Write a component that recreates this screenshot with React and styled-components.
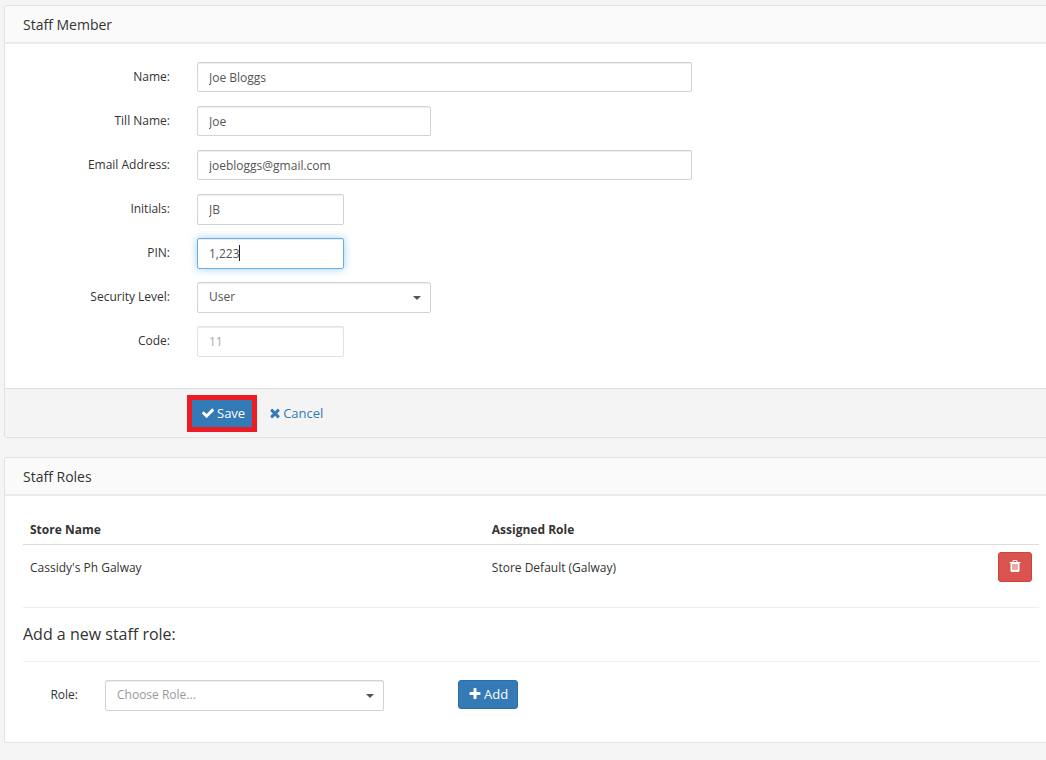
import React from "react";
import styled, { createGlobalStyle, css } from "styled-components";

const GlobalStyle = createGlobalStyle`
  *, *::before, *::after { box-sizing: border-box; }
  body {
    margin: 0;
    background: #f5f5f5;
    color: #333;
    font-family: "Open Sans", "Liberation Sans", sans-serif;
    font-size: 12px;
    line-height: 18px;
  }
  input, select, button { font: inherit; }
`;

const Page = styled.main`
  display: flex;
  flex-direction: column;
  gap: 19px;
  padding: 5px 0 16px 4px;
`;

const Panel = styled.section`
  background: #fff;
  border: 1px solid #e2e2e2;
  border-right: 0;
  border-radius: 3px 0 0 3px;
`;

const PanelHeader = styled.header`
  padding: 9px 18px 7px;
  background: #fafafa;
  border-bottom: 2px solid #ebebeb;
`;

const PanelTitle = styled.h2`
  margin: 0;
  font-size: 14px;
  font-weight: 400;
  line-height: 20px;
`;

const FormBody = styled.div`
  display: flex;
  flex-direction: column;
  gap: 14px;
  padding: 18px 18px 32px;
`;

const FormRow = styled.div`
  display: grid;
  grid-template-columns: 147px minmax(0, 1fr);
  grid-template-rows: 30px;
  column-gap: 27px;
`;

const Label = styled.label`
  line-height: 30px;
  text-align: right;
`;

const widths = { small: "147px", medium: "234px", role: "279px", large: "495px" };

const FieldBox = styled.div`
  position: relative;
  width: 100%;
  max-width: ${(p) => widths[p.$size]};
`;

const control = css`
  display: block;
  width: 100%;
  height: ${(p) => (p.$tall ? "31px" : "30px")};
  border: 1px solid #d3d3d3;
  border-radius: 2px;
  background: #fff;
  color: #555;
  box-shadow: inset 0 1px 1px rgba(0, 0, 0, 0.075);
  outline: none;
`;

const TextInput = styled.input`
  ${control}
  padding: 0 11px;
  ${(p) =>
    p.$active &&
    css`
      border-color: #66afe9;
      box-shadow: inset 0 1px 1px rgba(0, 0, 0, 0.075), 0 0 8px rgba(102, 175, 233, 0.6);
    `}
  &:disabled {
    border-color: #e2e2e2;
    color: #aaa;
  }
`;

const Caret = styled.span`
  position: absolute;
  top: 7px;
  left: 42px;
  width: 1px;
  height: 16px;
  background: #222;
`;

const SelectBox = styled(FieldBox)`
  &::after {
    content: "";
    position: absolute;
    top: 14px;
    right: 10px;
    border: 4px solid transparent;
    border-top-color: #555;
    border-bottom: 0;
    pointer-events: none;
  }
`;

const Select = styled.select`
  ${control}
  appearance: none;
  padding: 0 28px 2px 11px;
  color: ${(p) => (p.$placeholder ? "#999" : "#555")};
`;

const PanelFooter = styled.footer`
  display: flex;
  align-items: center;
  gap: 11px;
  padding: 6px 18px 5px 182px;
  background: #f4f4f4;
  border-top: 1px solid #ddd;
`;

const Button = styled.button`
  display: inline-flex;
  align-items: center;
  justify-content: center;
  gap: 2px;
  height: ${(p) => (p.$danger ? "30px" : "29px")};
  padding: ${(p) => (p.$danger ? "0 9px 2px" : "0 9px 1px")};
  border: 1px solid ${(p) => (p.$danger ? "#d43f3a" : "#2e6da4")};
  border-radius: 3px;
  background: ${(p) => (p.$danger ? "#d9534f" : "#337ab7")};
  color: #fff;
  font-size: 13px;
  cursor: pointer;
`;

const SaveButton = styled(Button)`
  height: 37px;
  padding: 0 7px 1px 9px;
  border: 5px solid #ed1c24;
  border-radius: 0;
  font-weight: 500;
`;

const CancelLink = styled.a`
  display: inline-flex;
  align-items: center;
  gap: 1px;
  padding-bottom: 1px;
  color: #337ab7;
  font-size: 13px;
  font-weight: 500;
  text-decoration: none;
`;

const RolesBody = styled.div`
  padding: 18px 7px 31px 18px;
`;

const Table = styled.table`
  width: 100%;
  border-collapse: collapse;
  table-layout: fixed;
`;

const Th = styled.th`
  width: ${(p) => (p.$action ? "auto" : "calc(100% * 5 / 11)")};
  padding: 7px 7px 5px;
  border-bottom: 1px solid #ddd;
  text-align: left;
  font-weight: 700;
`;

const Td = styled.td`
  padding: ${(p) => (p.$action ? "7px" : "8px 7px 6px")};
  text-align: ${(p) => (p.$action ? "right" : "left")};
  vertical-align: middle;
`;

const SectionTitle = styled.h3`
  margin: 18px 0;
  padding: 17px 0;
  border: solid #eee;
  border-width: 1px 0;
  font-size: 16px;
  font-weight: 400;
  line-height: 19px;
`;

const RoleForm = styled.form`
  display: grid;
  grid-template-columns: 55px minmax(0, 279px) auto;
  justify-content: start;
  align-items: start;
  column-gap: 27px;
`;

const RoleAction = styled.div`
  display: flex;
  padding-left: 47px;
`;

const Svg = styled.svg`
  display: block;
  width: 14px;
  height: 14px;
  fill: currentColor;
`;

const paths = {
  check:
    "M1671 566q0 40-28 68l-724 724-136 136q-28 28-68 28t-68-28l-136-136-362-362q-28-28-28-68t28-68l136-136q28-28 68-28t68 28l294 295 656-657q28-28 68-28t68 28l136 136q28 28 28 68z",
  times:
    "M1490 1322q0 40-28 68l-136 136q-28 28-68 28t-68-28l-294-294-294 294q-28 28-68 28t-68-28l-136-136q-28-28-28-68t28-68l294-294-294-294q-28-28-28-68t28-68l136-136q28-28 68-28t68 28l294 294 294-294q28-28 68-28t68 28l136 136q28 28 28 68t-28 68l-294 294 294 294q28 28 28 68z",
  plus:
    "M1600 736v192q0 40-28 68t-68 28h-416v416q0 40-28 68t-68 28h-192q-40 0-68-28t-28-68v-416h-416q-40 0-68-28t-28-68v-192q0-40 28-68t68-28h416v-416q0-40 28-68t68-28h192q40 0 68 28t28 68v416h416q40 0 68 28t28 68z",
  trash:
    "M704 1376v-704q0-14-9-23t-23-9h-64q-14 0-23 9t-9 23v704q0 14 9 23t23 9h64q14 0 23-9t9-23zm256 0v-704q0-14-9-23t-23-9h-64q-14 0-23 9t-9 23v704q0 14 9 23t23 9h64q14 0 23-9t9-23zm256 0v-704q0-14-9-23t-23-9h-64q-14 0-23 9t-9 23v704q0 14 9 23t23 9h64q14 0 23-9t9-23zm-544-992h448l-48-117q-7-9-17-11h-317q-10 2-17 11zm928 32v64q0 14-9 23t-23 9h-96v948q0 83-47 143.5t-113 60.5h-832q-66 0-113-58.5t-47-141.5v-952h-96q-14 0-23-9t-9-23v-64q0-14 9-23t23-9h309l70-167q15-37 54-63t79-26h320q40 0 79 26t54 63l70 167h309q14 0 23 9t9 23z",
};

const Icon = ({ name }) => (
  <Svg viewBox="0 0 1792 1792" aria-hidden="true">
    <path d={paths[name]} />
  </Svg>
);

const Field = ({ id, label, size, value, active, disabled }) => (
  <FormRow>
    <Label htmlFor={id}>{label}</Label>
    <FieldBox $size={size}>
      <TextInput
        id={id}
        type="text"
        defaultValue={value}
        $active={active}
        $tall={size === "small"}
        disabled={disabled}
      />
      {active && <Caret />}
    </FieldBox>
  </FormRow>
);

export default function App() {
  return (
    <>
      <GlobalStyle />
      <Page>
        <Panel>
          <PanelHeader>
            <PanelTitle>Staff Member</PanelTitle>
          </PanelHeader>
          <FormBody>
            <Field id="name" label="Name:" size="large" value="Joe Bloggs" />
            <Field id="till" label="Till Name:" size="medium" value="Joe" />
            <Field id="email" label="Email Address:" size="large" value="joebloggs@gmail.com" />
            <Field id="initials" label="Initials:" size="small" value="JB" />
            <Field id="pin" label="PIN:" size="small" value="1,223" active />
            <FormRow>
              <Label htmlFor="level">Security Level:</Label>
              <SelectBox $size="medium">
                <Select id="level" defaultValue="User" $tall>
                  <option>User</option>
                </Select>
              </SelectBox>
            </FormRow>
            <Field id="code" label="Code:" size="small" value="11" disabled />
          </FormBody>
          <PanelFooter>
            <SaveButton type="button">
              <Icon name="check" />
              Save
            </SaveButton>
            <CancelLink href="#cancel">
              <Icon name="times" />
              Cancel
            </CancelLink>
          </PanelFooter>
        </Panel>

        <Panel>
          <PanelHeader>
            <PanelTitle>Staff Roles</PanelTitle>
          </PanelHeader>
          <RolesBody>
            <Table>
              <thead>
                <tr>
                  <Th scope="col">Store Name</Th>
                  <Th scope="col">Assigned Role</Th>
                  <Th $action />
                </tr>
              </thead>
              <tbody>
                <tr>
                  <Td>Cassidy's Ph Galway</Td>
                  <Td>Store Default (Galway)</Td>
                  <Td $action>
                    <Button type="button" $danger aria-label="Delete role">
                      <Icon name="trash" />
                    </Button>
                  </Td>
                </tr>
              </tbody>
            </Table>
            <SectionTitle>Add a new staff role:</SectionTitle>
            <RoleForm>
              <Label htmlFor="role">Role:</Label>
              <SelectBox $size="role">
                <Select id="role" defaultValue="" $placeholder $tall>
                  <option value="">Choose Role...</option>
                </Select>
              </SelectBox>
              <RoleAction>
                <Button type="button">
                  <Icon name="plus" />
                  Add
                </Button>
              </RoleAction>
            </RoleForm>
          </RolesBody>
        </Panel>
      </Page>
    </>
  );
}
